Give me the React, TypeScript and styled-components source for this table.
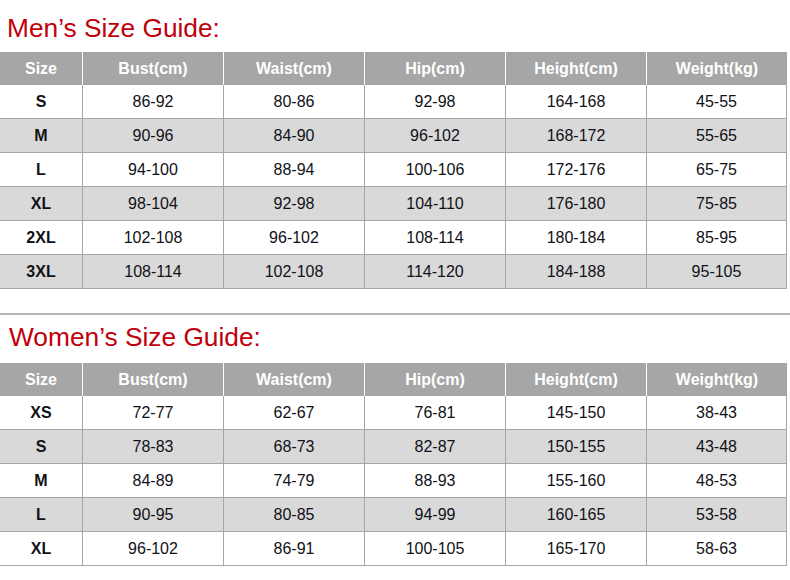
import React from "react";
import styled, { createGlobalStyle } from "styled-components";

const Global = createGlobalStyle`
  html, body { margin: 0; padding: 0; background: #ffffff; }
  body { font-family: "Liberation Sans", Arial, sans-serif; }
`;

const Page = styled.div`
  width: 790px;
  display: flex;
  flex-direction: column;
`;

const Title = styled.h2<{ $top: number; $left: number; $height: number }>`
  margin: 0;
  box-sizing: border-box;
  height: ${(p) => p.$height}px;
  padding: ${(p) => p.$top}px 0 0 ${(p) => p.$left}px;
  font-family: "Liberation Sans", Arial, sans-serif;
  font-weight: normal;
  font-size: 26.3px;
  line-height: 30px;
  color: #c0000c;
`;

const Table = styled.div`
  width: 787px;
  display: grid;
  grid-template-columns: 82px repeat(5, 141px);
`;

const HeadCell = styled.div`
  height: 33px;
  background: #a6a6a6;
  color: #ffffff;
  font-weight: bold;
  font-size: 16px;
  display: flex;
  align-items: center;
  justify-content: center;
  border-left: 1px solid #ffffff;
  box-sizing: border-box;
  &:first-child { border-left: none; }
`;

const Cell = styled.div<{ $shade: boolean; $first: boolean; $last: boolean }>`
  height: 34px;
  box-sizing: border-box;
  background: ${(p) => (p.$shade ? "#d9d9d9" : "#ffffff")};
  border-bottom: 1px solid #a6a6a6;
  border-left: ${(p) => (p.$first ? "none" : "1px solid #a6a6a6")};
  border-right: ${(p) => (p.$last ? "1px solid #a6a6a6" : "none")};
  display: flex;
  align-items: center;
  justify-content: center;
  padding-top: 1px;
  font-size: 16px;
  font-weight: ${(p) => (p.$first ? "bold" : "normal")};
  color: #111118;
`;

const Divider = styled.hr`
  margin: 24px 0 0 0;
  border: none;
  height: 2px;
  background: #b4b4b4;
  width: 790px;
`;

const headers = ["Size", "Bust(cm)", "Waist(cm)", "Hip(cm)", "Height(cm)", "Weight(kg)"];

const men = [
  ["S", "86-92", "80-86", "92-98", "164-168", "45-55"],
  ["M", "90-96", "84-90", "96-102", "168-172", "55-65"],
  ["L", "94-100", "88-94", "100-106", "172-176", "65-75"],
  ["XL", "98-104", "92-98", "104-110", "176-180", "75-85"],
  ["2XL", "102-108", "96-102", "108-114", "180-184", "85-95"],
  ["3XL", "108-114", "102-108", "114-120", "184-188", "95-105"],
];

const women = [
  ["XS", "72-77", "62-67", "76-81", "145-150", "38-43"],
  ["S", "78-83", "68-73", "82-87", "150-155", "43-48"],
  ["M", "84-89", "74-79", "88-93", "155-160", "48-53"],
  ["L", "90-95", "80-85", "94-99", "160-165", "53-58"],
  ["XL", "96-102", "86-91", "100-105", "165-170", "58-63"],
];

function SizeTable({ rows }: { rows: string[][] }) {
  return (
    <Table>
      {headers.map((h) => (
        <HeadCell key={h}>{h}</HeadCell>
      ))}
      {rows.map((r, i) =>
        r.map((v, j) => (
          <Cell key={`${i}-${j}`} $shade={i % 2 === 1} $first={j === 0} $last={j === r.length - 1}>
            {v}
          </Cell>
        ))
      )}
    </Table>
  );
}

export default function App() {
  return (
    <Page>
      <Global />
      <Title $top={13} $left={7} $height={52}>Men’s Size Guide:</Title>
      <SizeTable rows={men} />
      <Divider />
      <Title $top={7} $left={9} $height={48}>Women’s Size Guide:</Title>
      <SizeTable rows={women} />
    </Page>
  );
}
